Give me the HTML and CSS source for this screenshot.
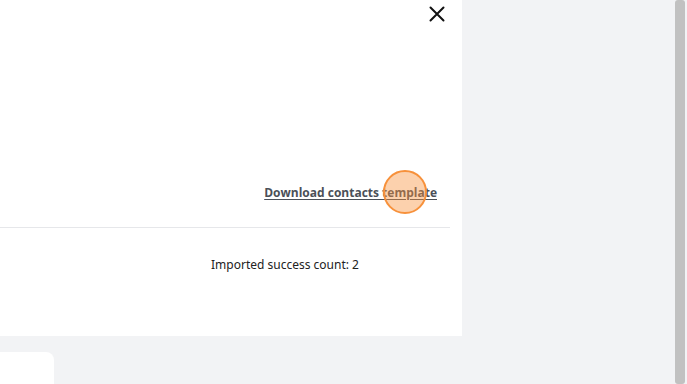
FILE: index.html
```html
<!DOCTYPE html>
<html>
<head>
<meta charset="utf-8">
<link rel="stylesheet" href="styles.css">
</head>
<body>
<div class="page">
  <div class="main">
    <div class="panel">
      <div class="panel-head">
        <button class="close" aria-label="Close">
          <svg width="16" height="16" viewBox="0 0 16 16"><path d="M1.5 1.5L14.5 14.5M14.5 1.5L1.5 14.5" stroke="#111" stroke-width="2" stroke-linecap="round" fill="none"/></svg>
        </button>
      </div>
      <div class="link-row">
        <a class="dl-link" href="#">Download contacts template</a>
        <span class="click-marker"></span>
      </div>
      <div class="divider"></div>
      <div class="result">Imported success count: 2</div>
    </div>
    <div class="below">
      <div class="card"></div>
    </div>
  </div>
  <div class="scrollbar"><div class="thumb"></div></div>
</div>
</body>
</html>
```
FILE: styles.css
```css
html, body {
  margin: 0;
  padding: 0;
  height: 100%;
}
body {
  background: #f2f3f5;
  font-family: "Open Sans", "Noto Sans", sans-serif;
  overflow: hidden;
}
.page {
  display: flex;
  height: 384px;
  width: 687px;
}
.main {
  width: 675px;
  display: flex;
  flex-direction: column;
}
.panel {
  flex-shrink: 0;
  width: 462px;
  height: 336px;
  background: #fff;
  box-sizing: border-box;
  display: flex;
  flex-direction: column;
}
.panel-head {
  display: flex;
  justify-content: flex-end;
  padding: 6px 17px 0 0;
  height: 26px;
}
.close {
  border: 0;
  background: none;
  padding: 0;
  width: 16px;
  height: 16px;
  cursor: pointer;
}
.link-row {
  position: relative;
  display: flex;
  justify-content: flex-end;
  padding-right: 25px;
  margin-top: 150px;
  height: 20px;
  align-items: center;
}
.dl-link {
  font-family: "Open Sans", sans-serif;
  font-weight: 700;
  font-size: 12px;
  color: #4b5058;
  text-decoration: underline;
  text-underline-offset: 2px;
}
.click-marker {
  position: absolute;
  left: 383px;
  top: -12px;
  width: 40px;
  height: 40px;
  border-radius: 50%;
  border: 2px solid #f7913b;
  background: rgba(247, 145, 59, 0.42);
}
.divider {
  margin-top: 25px;
  width: 450px;
  height: 1px;
  background: #e6e7ea;
}
.result {
  margin-top: 28px;
  padding-left: 211px;
  font-family: "Noto Sans", sans-serif;
  font-size: 12px;
  color: #222;
}
.below {
  flex: 1;
  padding-top: 16px;
}
.card {
  width: 54px;
  height: 40px;
  background: #fff;
  border-top-right-radius: 8px;
}
.scrollbar {
  width: 12px;
  height: 384px;
  background: #f2f3f5;
}
.thumb {
  width: 10px;
  height: 384px;
  background: #c1c1c1;
  border-radius: 3px;
}
```
